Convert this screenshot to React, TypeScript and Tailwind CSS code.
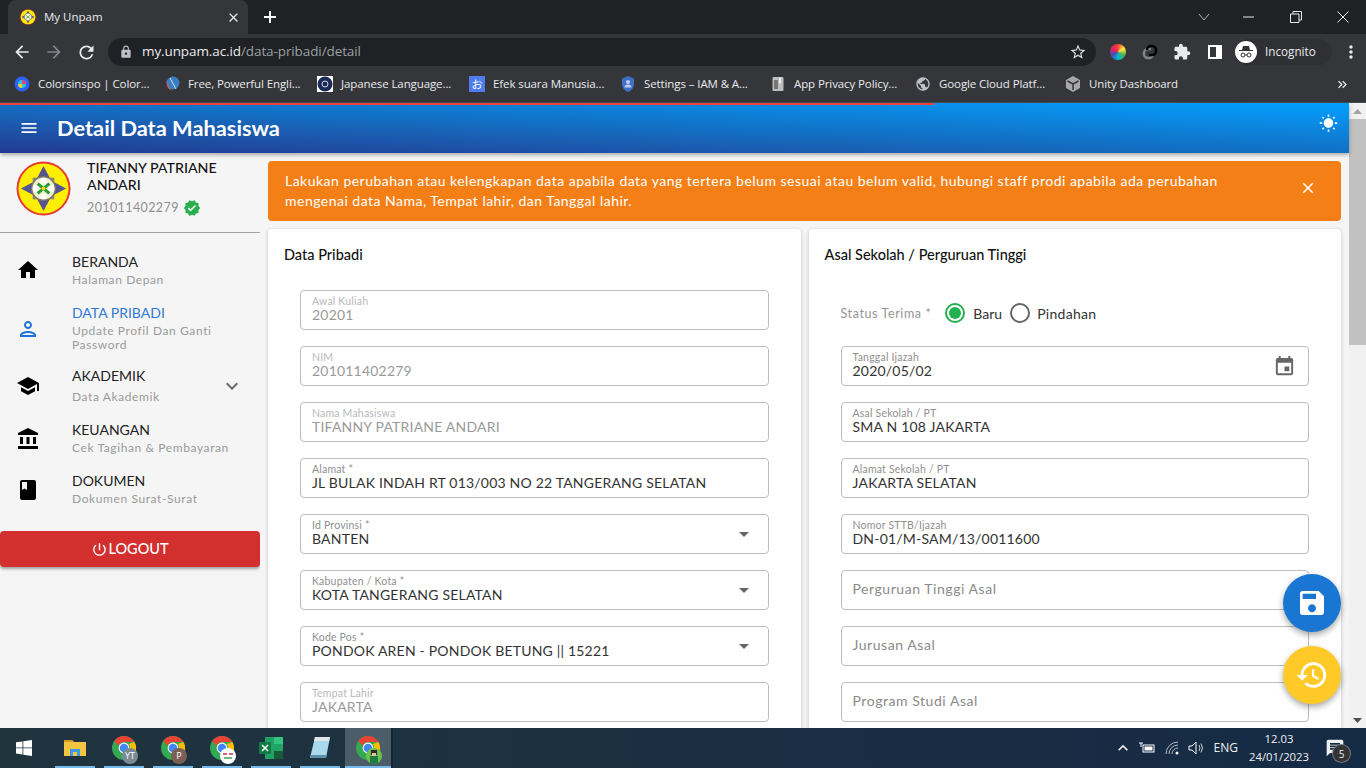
import React from "react";
import {
  MdAccountBalance, MdArrowBack, MdArrowDropDown, MdArrowForward, MdBook, MdClose, MdExpandMore, MdExtension,
  MdHistory, MdHome, MdKeyboardDoubleArrowRight, MdLock, MdMenu, MdMoreVert, MdOutlinePerson,
  MdPowerSettingsNew, MdPublic, MdRefresh, MdSave, MdSchool, MdStarBorder, MdVerified, MdWbSunny, MdEvent,
  MdKeyboardArrowUp, MdMessage,
} from "react-icons/md";

const page = { fontFamily: '"Lato", "Noto Sans", sans-serif' };
const ui = { fontFamily: '"Open Sans", "Noto Sans", sans-serif' };

function Logo({ s }: { s: number }) {
  return (
    <svg width={s} height={s} viewBox="0 0 56 56" className="shrink-0">
      <circle cx="28" cy="28" r="27.500" fill="#e53935" />
      <circle cx="28" cy="28" r="25.500" fill="#ffee00" />
      <polygon points="28,5 36,20 51,28 36,36 28,51 20,36 5,28 20,20" fill="#55558f" />
      <rect x="17" y="17" width="22" height="22" fill="#8a8a78" />
      <circle cx="28" cy="28" r="12" fill="#f7f0d0" stroke="#77776a" strokeWidth="1.500" />
      <circle cx="28" cy="20" r="3" fill="#fff" />
      <circle cx="28" cy="36" r="3" fill="#fff" />
      <circle cx="20" cy="28" r="3" fill="#fff" />
      <circle cx="36" cy="28" r="3" fill="#fff" />
      <path d="M22 23 L34 33 M34 23 L22 33" stroke="#1f9d3a" strokeWidth="3" />
      <circle cx="28" cy="28" r="2" fill="#ffd600" />
    </svg>
  );
}

function ChromeIcon({ badge, bg, children }: { badge?: string; bg?: string; children?: React.ReactNode }) {
  return (
    <div className="relative h-[24px] w-[24px]">
      <svg width="24" height="24" viewBox="0 0 24 24">
        <circle cx="12" cy="12" r="12" fill="#34a853" />
        <path d="M12 0a12 12 0 0 1 10.400 6H12a6 6 0 0 0-5.600 3.800L2.300 5A12 12 0 0 1 12 0z" fill="#ea4335" />
        <path d="M22.400 6A12 12 0 0 1 11 24l5-8.500A6 6 0 0 0 17 8z" fill="#fbbc05" />
        <circle cx="12" cy="12" r="5.400" fill="#fff" />
        <circle cx="12" cy="12" r="4.300" fill="#4285f4" />
      </svg>
      <div
        className="absolute left-[10px] top-[12px] flex h-[16px] w-[16px] items-center justify-center overflow-hidden rounded-full text-[9px] leading-none text-white"
        style={{ background: bg, ...ui }}
      >
        {badge}
        {children}
      </div>
    </div>
  );
}

function FavGlobe() {
  return <MdPublic className="text-[#bdc1c6]" size={16} />;
}

const bookmarks: { t: string; w: number; i: React.ReactNode }[] = [
  {
    t: "Colorsinspo | Color...", w: 150,
    i: <svg width="16" height="16" viewBox="0 0 16 16"><circle cx="8" cy="8" r="7.500" fill="#2962ff" /><circle cx="8" cy="8" r="4" fill="#26c6da" /><path d="M8 4a4 4 0 0 1 4 4H8z" fill="#ec407a" /><path d="M4 8a4 4 0 0 0 4 4V8z" fill="#ffca28" /></svg>,
  },
  {
    t: "Free, Powerful Engli...", w: 153,
    i: <svg width="16" height="16" viewBox="0 0 16 16"><circle cx="9" cy="7" r="6.500" fill="#3a7fc4" /><path d="M3 3 Q1 12 8 15 Q3 10 3 3z" fill="#e05545" /><path d="M6 2l6 11" stroke="#cfe3f5" strokeWidth="1" /></svg>,
  },
  {
    t: "Japanese Language...", w: 152,
    i: <svg width="16" height="16" viewBox="0 0 16 16"><rect width="16" height="16" fill="#fff" /><circle cx="8" cy="8" r="7.500" fill="#1d2a55" /><circle cx="8" cy="8" r="3" fill="none" stroke="#cfd8ea" strokeWidth="1" /></svg>,
  },
  {
    t: "Efek suara Manusia...", w: 151,
    i: <div className="flex h-[16px] w-[16px] items-center justify-center bg-[#4f7df0] text-[11px] leading-none text-white" style={{ fontFamily: '"Noto Sans CJK JP", sans-serif' }}>お</div>,
  },
  {
    t: "Settings – IAM & A...", w: 150,
    i: <svg width="16" height="16" viewBox="0 0 16 16"><path d="M8 0l6 2.500V8c0 4-3 7-6 8-3-1-6-4-6-8V2.500z" fill="#3f6fc9" /><circle cx="8" cy="6" r="2" fill="#bcd0f2" /><path d="M4.500 11.500a3.500 3 0 0 1 7 0z" fill="#bcd0f2" /></svg>,
  },
  {
    t: "App Privacy Policy...", w: 145,
    i: <svg width="16" height="16" viewBox="0 0 16 16"><rect x="2.500" y="1" width="11" height="14" rx="1" fill="#bdbdbd" /><rect x="4" y="4" width="4" height="9" fill="#757575" /><rect x="9" y="1.500" width="2" height="6" fill="#eee" /></svg>,
  },
  { t: "Google Cloud Platf...", w: 150, i: <FavGlobe /> },
  {
    t: "Unity Dashboard", w: 120,
    i: <svg width="16" height="16" viewBox="0 0 16 16"><path d="M8 0l7 4v8l-7 4-7-4V4z" fill="#a8a8a8" /><path d="M8 8v6M8 8L2.500 5M8 8l5.500-3" stroke="#35363a" strokeWidth="1.500" /></svg>,
  },
];

function Chrome() {
  return (
    <div className="shrink-0 text-[#e8eaed]" style={ui}>
      <div className="flex h-[34px] items-end bg-[#202124]">
        <div className="ml-[8px] flex h-[34px] w-[240px] items-center rounded-t-lg bg-[#35363a] pl-[12px] pr-[6px]">
          <Logo s={16} />
          <span className="ml-[8px] flex-1 text-[11.500px]">My Unpam</span>
          <MdClose size={15} className="mr-[1px]" />
        </div>
        <div className="ml-[15px] flex h-[34px] items-center text-white">
          <svg width="14" height="14" viewBox="0 0 14 14"><path d="M7 1v12M1 7h12" stroke="#fff" strokeWidth="2" /></svg>
        </div>
        <div className="flex-1" />
        <div className="flex h-[34px] items-center">
          <svg width="12" height="8" viewBox="0 0 12 8" className="mr-[33px]"><path d="M1 1l5 6 5-6" fill="none" stroke="#b0b2b5" /></svg>
          <svg width="11" height="2" viewBox="0 0 11 2" className="mr-[36px]"><path d="M0 1h11" stroke="#e8eaed" /></svg>
          <svg width="12" height="12" viewBox="0 0 12 12" className="mr-[35px]"><path d="M.5 3h8.500v8.500H.500zM3 3V.500h8.500V9H9" fill="none" stroke="#e8eaed" /></svg>
          <svg width="12" height="12" viewBox="0 0 12 12" className="mr-[17px]"><path d="M.5.5l11 11M11.500.5l-11 11" stroke="#e8eaed" /></svg>
        </div>
      </div>
      <div className="flex h-[34px] items-center bg-[#35363a] pt-[2px]">
        <MdArrowBack size={20} className="ml-[12px]" />
        <MdArrowForward size={20} className="ml-[12px] text-[#80868b]" />
        <MdRefresh size={21} className="ml-[12px]" />
        <div className="ml-[11px] flex h-[28px] w-[988px] items-center rounded-full bg-[#202124] pl-[11px] pr-[9px]">
          <MdLock size={14} className="text-[#bdc1c6]" />
          <span className="ml-[9px] flex-1 text-[13.500px] leading-none" style={{ letterSpacing: "-0.1px" }}>
            my.unpam.ac.id<span className="text-[#9aa0a6]">/data-pribadi/detail</span>
          </span>
          <MdStarBorder size={18} className="text-[#dadce0]" />
        </div>
        <div className="ml-[14px] h-[16px] w-[16px] rounded-full" style={{ background: "conic-gradient(#f44336,#ffeb3b,#4caf50,#00bcd4,#3f51b5,#e91e63,#f44336)" }} />
        <svg width="16" height="16" viewBox="0 0 16 16" className="ml-[16px]">
          <path d="M9 5H6a4 4 0 0 0-4 4v1a4 4 0 0 0 4 4h1a4 4 0 0 0 4-4" fill="none" stroke="#80868b" strokeWidth="2.500" />
          <path d="M7 11h3a4 4 0 0 0 4-4V6a4 4 0 0 0-4-4H9a4 4 0 0 0-4 4" fill="none" stroke="#000" strokeWidth="2.500" />
        </svg>
        <MdExtension size={18} className="ml-[15px]" />
        <svg width="14" height="14" viewBox="0 0 14 14" className="ml-[17px]"><rect x="1" y="1" width="12" height="12" fill="none" stroke="#fff" strokeWidth="2" /><rect x="8" y="1" width="5" height="12" fill="#fff" /></svg>
        <div className="ml-[13px] flex h-[26px] w-[97px] items-center rounded-full bg-[#2f3033]">
          <div className="flex h-[22px] w-[22px] items-center justify-center rounded-full bg-white">
            <svg width="16" height="14" viewBox="0 0 16 14"><path d="M4 5l1-4h6l1 4h3v1H1V5z" fill="#333" /><circle cx="5" cy="10" r="2" fill="none" stroke="#333" /><circle cx="11" cy="10" r="2" fill="none" stroke="#333" /><path d="M7 10h2" stroke="#333" /></svg>
          </div>
          <span className="ml-[8px] text-[11.700px] leading-none">Incognito</span>
        </div>
        <MdMoreVert size={20} className="ml-[9px]" />
      </div>
      <div className="flex h-[35px] items-center border-b border-[#4a4b4e] bg-[#35363a] pb-[2px] pl-[14px]">
        {bookmarks.map((b) => (
          <div key={b.t} className="flex shrink-0 items-center gap-[8px]" style={{ width: b.w }}>
            <span className="flex h-[16px] w-[16px] items-center justify-center">{b.i}</span>
            <span className="whitespace-nowrap text-[11.500px] leading-none" style={{ letterSpacing: "-0.1px" }}>{b.t}</span>
          </div>
        ))}
        <div className="flex-1" />
        <MdKeyboardDoubleArrowRight size={15} className="mr-[16px]" />
      </div>
    </div>
  );
}

function NavItem({ icon, title, sub, blue, chevron, cls, subCls = "mt-[2px]" }: { icon: React.ReactNode; title: string; sub: string[]; blue?: boolean; chevron?: boolean; cls: string; subCls?: string }) {
  return (
    <div className={`flex items-center pl-[16px] ${cls}`}>
      <div className={`flex w-[24px] shrink-0 justify-center ${blue ? "text-[#1e73d8]" : "text-black"}`}>{icon}</div>
      <div className="ml-[32px] flex-1">
        <div className={`-mt-[1px] text-[14px] leading-[18px] ${blue ? "text-[#2f78d6]" : "text-[#222]"}`}>{title}</div>
        <div className={subCls}>
          {sub.map((s) => (
            <div key={s} className="text-[12px] leading-[14px] tracking-[0.6px] text-[#9a9a9a]">{s}</div>
          ))}
        </div>
      </div>
      {chevron && <MdExpandMore size={24} className="mr-[16px] text-[#6b6b6b]" />}
    </div>
  );
}

function Sidebar() {
  return (
    <aside className="flex w-[260px] shrink-0 flex-col bg-[#f5f5f5] shadow-[1px_0_4px_rgba(0,0,0,0.3)]">
      <div className="flex h-[80px] shrink-0 border-b border-[#a3a3a3] pl-[16px] pt-[8px]">
        <Logo s={55} />
        <div className="-mt-[2px] ml-[16px]">
          <div className="text-[14.200px] font-medium leading-[17px] text-[#151515]">TIFANNY PATRIANE<br />ANDARI</div>
          <div className="mt-[6px] flex items-center gap-[4px] text-[12.500px] leading-[16px] tracking-[0.4px] text-[#8f8f8f]">
            201011402279
            <MdVerified size={18} className="text-[#27ae4f]" />
          </div>
        </div>
      </div>
      <NavItem cls="mt-[21px]" icon={<MdHome size={24} className="mb-[2px]" />} title="BERANDA" sub={["Halaman Depan"]} />
      <NavItem cls="mt-[18px]" icon={<MdOutlinePerson size={24} />} title="DATA PRIBADI" sub={["Update Profil Dan Ganti", "Password"]} blue />
      <NavItem cls="mt-[16px]" subCls="mt-[5px]" icon={<MdSchool size={24} />} title="AKADEMIK" sub={["Data Akademik"]} chevron />
      <NavItem cls="mt-[18px]" icon={<MdAccountBalance size={24} />} title="KEUANGAN" sub={["Cek Tagihan & Pembayaran"]} />
      <NavItem cls="mt-[18px]" icon={<MdBook size={24} />} title="DOKUMEN" sub={["Dokumen Surat-Surat"]} />
      <button className="mt-[25px] flex h-[36px] shrink-0 items-center justify-center rounded-[4px] bg-[#d32f2f] text-[14.500px] font-medium text-white shadow-[0_2px_3px_rgba(0,0,0,0.35)]">
        <MdPowerSettingsNew size={17} />LOGOUT
      </button>
    </aside>
  );
}

function Field({ label, value, disabled, select, date, empty }: { label: string; value?: string; disabled?: boolean; select?: boolean; date?: boolean; empty?: boolean }) {
  return (
    <div className="flex h-[40px] shrink-0 items-center rounded-[4px] border border-[#bdbdbd] pl-[11px] pr-[12px]">
      <div className="min-w-0 flex-1 pb-[2px]">
        {empty ? (
          <div className="pb-[2px] text-[14px] tracking-[0.55px] text-[#8a8a8a]">{label}</div>
        ) : (
          <>
            <div className={`text-[10.500px] leading-[11px] tracking-[0.2px] ${disabled ? "text-[#b9b9b9]" : "text-[#8f8f8f]"}`}>{label}</div>
            <div className={`-mt-[1px] whitespace-nowrap text-[14px] leading-[17px] tracking-[0.2px] ${disabled ? "text-[#9a9a9a]" : "text-[#333]"}`}>{value}</div>
          </>
        )}
      </div>
      {select && <MdArrowDropDown size={24} className="text-[#666]" />}
      {date && <MdEvent size={23} className="text-[#666]" />}
    </div>
  );
}

function Card({ title, cls, children }: { title: string; cls: string; children: React.ReactNode }) {
  return (
    <section className={`flex-1 rounded-[4px] bg-white pb-[16px] pt-[17px] shadow-[0_1px_4px_rgba(0,0,0,0.2)] ${cls}`}>
      <h2 className="text-[14.500px] font-medium leading-[18px] text-[#111]">{title}</h2>
      {children}
    </section>
  );
}

function Main() {
  return (
    <main className="flex min-w-0 flex-1 flex-col gap-[8px] overflow-hidden bg-[#f5f5f5] pl-[8px] pr-[8px] pt-[8px]">
      <div className="flex h-[60px] shrink-0 items-center rounded-[4px] bg-[#f57f17] pl-[17px] pr-[24px] text-white">
        <p className="flex-1 text-[14px] leading-[20px] tracking-[0.485px]">
          Lakukan perubahan atau kelengkapan data apabila data yang tertera belum sesuai atau belum valid, hubungi staff prodi apabila ada perubahan<br />
          mengenai data Nama, Tempat lahir, dan Tanggal lahir.
        </p>
        <MdClose size={18} className="-mt-[6px]" />
      </div>
      <div className="flex gap-[8px]">
        <Card title="Data Pribadi" cls="pl-[16px] pr-[32px]">
          <div className="mt-[26px] flex flex-col gap-[16px] pl-[16px]">
            <Field label="Awal Kuliah" value="20201" disabled />
            <Field label="NIM" value="201011402279" disabled />
            <Field label="Nama Mahasiswa" value="TIFANNY PATRIANE ANDARI" disabled />
            <Field label="Alamat *" value="JL BULAK INDAH RT 013/003 NO 22 TANGERANG SELATAN" />
            <Field label="Id Provinsi *" value="BANTEN" select />
            <Field label="Kabupaten / Kota *" value="KOTA TANGERANG SELATAN" select />
            <Field label="Kode Pos *" value="PONDOK AREN - PONDOK BETUNG || 15221" select />
            <Field label="Tempat Lahir" value="JAKARTA" disabled />
          </div>
        </Card>
        <Card title="Asal Sekolah / Perguruan Tinggi" cls="pl-[16px] pr-[32px]">
          <div className="mt-[26px] flex flex-col gap-[16px] pl-[16px]">
            <div className="flex h-[40px] shrink-0 items-center pt-[6px]">
              <span className="mt-[3px] text-[12.500px] tracking-[0.6px] text-[#949494]">Status Terima *</span>
              <span className="ml-[14px] flex h-[20px] w-[20px] items-center justify-center rounded-full border-2 border-[#22b04f]">
                <span className="h-[12px] w-[12px] rounded-full bg-[#22b04f]" />
              </span>
              <span className="ml-[8px] text-[14px] text-[#333]">Baru</span>
              <span className="ml-[8px] h-[20px] w-[20px] rounded-full border-2 border-[#666]" />
              <span className="ml-[7px] text-[14px] tracking-[0.3px] text-[#333]">Pindahan</span>
            </div>
            <Field label="Tanggal Ijazah" value="2020/05/02" date />
            <Field label="Asal Sekolah / PT" value="SMA N 108 JAKARTA" />
            <Field label="Alamat Sekolah / PT" value="JAKARTA SELATAN" />
            <Field label="Nomor STTB/Ijazah" value="DN-01/M-SAM/13/0011600" />
            <Field label="Perguruan Tinggi Asal" empty />
            <Field label="Jurusan Asal" empty />
            <Field label="Program Studi Asal" empty />
          </div>
        </Card>
      </div>
    </main>
  );
}

function Scrollbar() {
  return (
    <div className="flex w-[17px] shrink-0 flex-col items-center bg-[#f1f1f1]">
      <div className="flex h-[16px] w-full items-center justify-center">
        <svg width="9" height="5" viewBox="0 0 9 5"><path d="M4.500 0L9 5H0z" fill="#a3a3a3" /></svg>
      </div>
      <div className="h-[226px] w-full bg-[#c1c1c1]" />
      <div className="flex-1" />
      <div className="flex h-[16px] w-full items-center justify-center">
        <svg width="9" height="5" viewBox="0 0 9 5"><path d="M0 0h9L4.500 5z" fill="#505050" /></svg>
      </div>
    </div>
  );
}

function Taskbar() {
  const slots: React.ReactNode[] = [
    <svg width="22" height="20" viewBox="0 0 22 20"><path d="M0 2h8l2 2h12v14H0z" fill="#f4c542" /><path d="M0 2h8l2 2H0z" fill="#d99a1c" /><path d="M6 18v-7h10v7h-3v-4H9v4z" fill="#3b9ae8" /></svg>,
    <ChromeIcon badge="YT" bg="#7d8a94" />,
    <ChromeIcon badge="P" bg="#7d5f56" />,
    <ChromeIcon bg="#ffffff">
      <svg width="16" height="16" viewBox="0 0 16 16"><path d="M3 6h4M9 6h4" stroke="#e0607a" strokeWidth="2" /><path d="M4 10h8" stroke="#3fa34d" strokeWidth="1.500" /></svg>
    </ChromeIcon>,
    <svg width="24" height="22" viewBox="0 0 24 22"><rect x="6" width="18" height="22" fill="#21a366" /><rect x="15" y="0" width="9" height="7" fill="#33c481" /><rect x="15" y="14" width="9" height="8" fill="#185c37" /><rect y="5" width="12" height="12" fill="#107c41" /><path d="M3 8l6 6M9 8l-6 6" stroke="#fff" strokeWidth="1.500" /></svg>,
    <svg width="22" height="24" viewBox="0 0 22 24"><path d="M6 1h15l-4 21H1z" fill="#a9d9ea" /><path d="M6 1h15l-1 4H5z" fill="#dfe6ea" /><path d="M1 22h16l1-3H2z" fill="#5f8fa8" /></svg>,
  ];
  return (
    <footer className="flex h-[40px] shrink-0 items-center bg-linear-to-r from-[#20343e] to-[#152a45] text-white" style={ui}>
      <div className="flex h-full w-[47px] items-center justify-center">
        <svg width="16" height="16" viewBox="0 0 16 16"><path d="M0 2.300l6.500-.9v6.100H0zM7.300 1.300L16 0v7.500H7.300zM0 8.300h6.500v6.200L0 13.600zM7.300 8.300H16V16l-8.700-1.200z" fill="#fff" /></svg>
      </div>
      <div className="flex h-full">
        <div className="w-[8px]" />
        {slots.map((s, i) => (
          <div key={i} className="mr-[9px] flex h-full w-[40px] flex-col items-center">
            <div className="flex flex-1 items-center justify-center pt-[1px]">{s}</div>
            <div className="h-[2px] w-full bg-[#76b9ed]" />
          </div>
        ))}
        <div className="-ml-[4px] flex h-full w-[46px] flex-col items-center bg-[#4a5d69]">
          <div className="flex flex-1 items-center justify-center pt-[1px]">
            <ChromeIcon bg="#6cc24a">
              <svg width="16" height="16" viewBox="0 0 16 16"><rect x="5" y="2" width="6" height="5" fill="#2d2d2d" /><rect x="6" y="5" width="4" height="3" fill="#e8c39e" /><rect x="4" y="8" width="8" height="8" fill="#1e7d45" /></svg>
            </ChromeIcon>
          </div>
          <div className="h-[2px] w-full bg-[#76b9ed]" />
        </div>
        <div className="w-[2px] bg-[#14232e]" />
      </div>
      <div className="flex-1" />
      <div className="flex items-center text-[#f0f0f0]">
        <MdKeyboardArrowUp size={20} className="mr-[6px]" />
        <svg width="16" height="12" viewBox="0 0 16 12" className="mr-[10px]"><rect x="4" y="3" width="11" height="7" fill="none" stroke="#fff" /><rect x="5.500" y="4.500" width="8" height="4" fill="#fff" /><path d="M0 1h4M2 1v4" stroke="#fff" /></svg>
        <svg width="16" height="14" viewBox="0 0 16 14" className="mr-[7px]"><path d="M1 13A12 12 0 0 1 13 1M4 13a9 9 0 0 1 9-9M7 13a6 6 0 0 1 6-6" fill="none" stroke="#b8c0c6" /><circle cx="12" cy="12" r="1.500" fill="#fff" /></svg>
        <svg width="18" height="14" viewBox="0 0 18 14" className="mr-[8px]"><path d="M1 5h3l4-4v12L4 9H1z" fill="none" stroke="#fff" /><path d="M11 4q2 3 0 6M13 2.500q3 4.500 0 9" fill="none" stroke="#d0d0d0" /></svg>
        <span className="mr-[5px] text-[12px]">ENG</span>
        <div className="flex w-[72px] flex-col items-center text-[11.300px] leading-[18px]">
          <span>12.03</span>
          <span>24/01/2023</span>
        </div>
        <div className="relative ml-[10px] mr-[21px] h-[20px] w-[20px]">
          <MdMessage size={20} />
          <span className="absolute left-[8px] top-[7px] flex h-[17px] w-[17px] items-center justify-center rounded-full bg-[#333] text-[10px] leading-none ring-1 ring-[#777]">5</span>
        </div>
      </div>
    </footer>
  );
}

export default function App() {
  return (
    <div className="relative flex h-[768px] w-[1366px] flex-col overflow-hidden bg-[#f5f5f5]" style={page}>
      <Chrome />
      <div className="flex min-h-0 flex-1">
        <div className="flex min-w-0 flex-1 flex-col">
          <div className="relative z-10 flex h-[50px] shrink-0 items-center bg-linear-to-tr from-[#203a90] via-[#1170c4] to-[#00a0ff] pl-[19px] pr-[11px] text-white shadow-[0_2px_4px_rgba(0,0,0,0.3)]">
            <MdMenu size={20} />
            <h1 className="ml-[18px] flex-1 text-[21.800px] font-bold leading-none">Detail Data Mahasiswa</h1>
            <MdWbSunny size={19} className="-mt-[10px]" />
          </div>
          <div className="flex min-h-0 flex-1">
            <Sidebar />
            <Main />
          </div>
        </div>
        <Scrollbar />
      </div>
      <Taskbar />
      <div className="absolute left-[1283px] top-[574px] flex h-[58px] w-[58px] items-center justify-center rounded-full bg-[#1976d2] text-white shadow-[0_3px_6px_rgba(0,0,0,0.35)]">
        <MdSave size={32} />
      </div>
      <div className="absolute left-[1283px] top-[646px] flex h-[58px] w-[58px] items-center justify-center rounded-full bg-[#ffca28] text-white shadow-[0_3px_6px_rgba(0,0,0,0.35)]">
        <MdHistory size={34} />
      </div>
      <div className="absolute left-[0px] top-[103px] z-20 h-[2px] w-[934px] bg-[#ef4040]" />
    </div>
  );
}
